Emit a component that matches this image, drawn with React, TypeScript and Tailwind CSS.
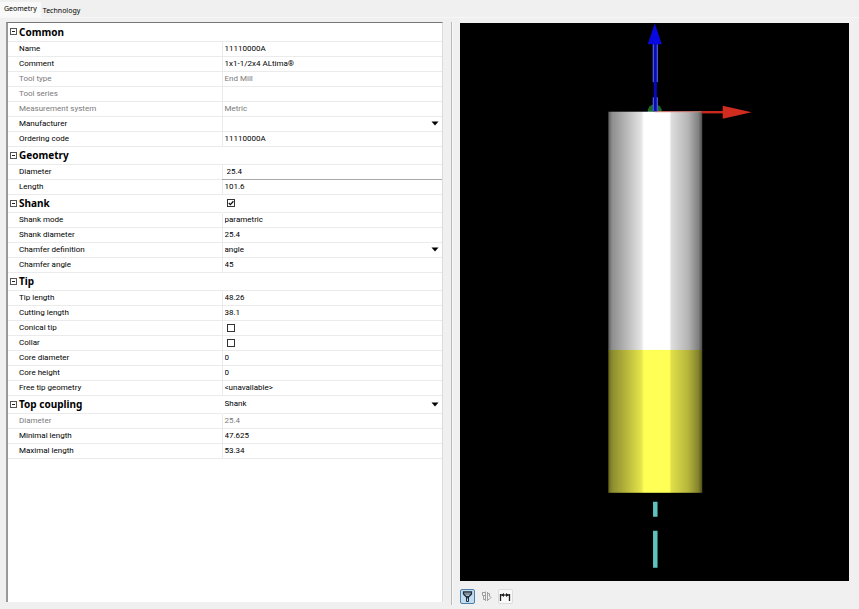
import { useState, type ReactNode } from "react";

type Kind = "text" | "static" | "select" | "check" | "edit";
type Field = { label: string; value?: string; kind: Kind; muted?: boolean; checked?: boolean };
type Section = { title: string; head?: Field; fields: Field[] };

const sections: Section[] = [
  {
    title: "Common",
    fields: [
      { label: "Name", value: "11110000A", kind: "text" },
      { label: "Comment", value: "1x1-1/2x4 ALtima®", kind: "text" },
      { label: "Tool type", value: "End Mill", kind: "static", muted: true },
      { label: "Tool series", value: "", kind: "static", muted: true },
      { label: "Measurement system", value: "Metric", kind: "static", muted: true },
      { label: "Manufacturer", value: "", kind: "select" },
      { label: "Ordering code", value: "11110000A", kind: "text" },
    ],
  },
  {
    title: "Geometry",
    fields: [
      { label: "Diameter", value: "25.4", kind: "edit" },
      { label: "Length", value: "101.6", kind: "text" },
    ],
  },
  {
    title: "Shank",
    head: { label: "Shank", kind: "check", checked: true },
    fields: [
      { label: "Shank mode", value: "parametric", kind: "text" },
      { label: "Shank diameter", value: "25.4", kind: "text" },
      { label: "Chamfer definition", value: "angle", kind: "select" },
      { label: "Chamfer angle", value: "45", kind: "text" },
    ],
  },
  {
    title: "Tip",
    fields: [
      { label: "Tip length", value: "48.26", kind: "text" },
      { label: "Cutting length", value: "38.1", kind: "text" },
      { label: "Conical tip", kind: "check" },
      { label: "Collar", kind: "check" },
      { label: "Core diameter", value: "0", kind: "text" },
      { label: "Core height", value: "0", kind: "text" },
      { label: "Free tip geometry", value: "<unavailable>", kind: "text" },
    ],
  },
  {
    title: "Top coupling",
    head: { label: "Top coupling", value: "Shank", kind: "select" },
    fields: [
      { label: "Diameter", value: "25.4", kind: "static", muted: true },
      { label: "Minimal length", value: "47.625", kind: "text" },
      { label: "Maximal length", value: "53.34", kind: "text" },
    ],
  },
];

function Control({ id, field }: { id: string; field: Field }) {
  if (field.kind === "check") {
    return (
      <span className="ml-1 grid size-2 place-items-center">
        <input
          id={id}
          type="checkbox"
          aria-label={field.label}
          defaultChecked={field.checked}
          className="peer col-start-1 row-start-1 size-2 appearance-none border border-[#333] bg-white"
        />
        <svg viewBox="0 0 8 8" className="pointer-events-none col-start-1 row-start-1 hidden size-2 peer-checked:block">
          <path d="M1.8 4 L3.4 5.6 L6.4 2.2" fill="none" stroke="#111" strokeWidth="1.3" />
        </svg>
      </span>
    );
  }
  if (field.kind === "select") {
    return (
      <span className="grid items-center">
        <select
          id={id}
          aria-label={field.label}
          defaultValue={field.value}
          className="col-start-1 row-start-1 h-3 w-full appearance-none bg-transparent pl-0.5 leading-3 outline-none"
        >
          <option value={field.value}>{field.value}</option>
        </select>
        <svg viewBox="0 0 8 5" className="pointer-events-none col-start-1 row-start-1 mr-[3px] h-[5px] w-2 justify-self-end">
          <path d="M0.5 0.5 H7.5 L4 4.5 Z" fill="#000" />
        </svg>
      </span>
    );
  }
  if (field.kind === "static") {
    return <output id={id} className="block h-3 pl-0.5 leading-3">{field.value}</output>;
  }
  return (
    <input
      id={id}
      defaultValue={field.value}
      className={`block h-3 w-full bg-transparent leading-3 outline-none ${field.kind === "edit" ? "pl-1" : "pl-0.5"}`}
    />
  );
}

function PropertySection({ section }: { section: Section }) {
  const [open, setOpen] = useState(true);
  const key = section.title.replace(/\s/g, "-");
  return (
    <tbody>
      <tr className="h-[18px] border-b border-[#ebebeb]">
        <th scope="rowgroup" colSpan={section.head ? 1 : 2} className="p-0 text-left">
          <button
            type="button"
            aria-expanded={open}
            onClick={() => setOpen(!open)}
            className="flex items-center gap-0.5 pl-0.5 font-['Noto_Sans',sans-serif] text-[10px] leading-3 font-bold text-black"
          >
            <svg viewBox="0 0 7 7" className="size-[7px]">
              <rect x="0.5" y="0.5" width="6" height="6" fill="#fff" stroke="#555" />
              <path d={open ? "M2 3.5 H5" : "M2 3.5 H5 M3.5 2 V5"} stroke="#222" />
            </svg>
            {section.title}
          </button>
        </th>
        {section.head && (
          <td className="border-l border-l-white p-0">
            <Control id={key} field={section.head} />
          </td>
        )}
      </tr>
      {open &&
        section.fields.map((field) => {
          const id = `${key}-${field.label.replace(/\s/g, "-")}`;
          return (
            <tr
              key={field.label}
              className={`h-[15px] border-b border-[#ebebeb] ${field.muted ? "text-[#7a7a7a]" : "text-black"}`}
            >
              <th scope="row" className="p-0 pl-[11px] text-left font-normal">
                <label htmlFor={id} className="block leading-3">{field.label}</label>
              </th>
              <td className={`border-l border-[#ebebeb] p-0 ${field.kind === "edit" ? "border-b border-b-[#a8a8a8]" : ""}`}>
                <Control id={id} field={field} />
              </td>
            </tr>
          );
        })}
    </tbody>
  );
}

function ToolButton({ label, active, boxed, children }: { label: string; active?: boolean; boxed?: boolean; children: ReactNode }) {
  const look = active
    ? "border-[#4d7fa8] bg-[#c4dcf0]"
    : boxed
      ? "border-[#dcdcdc] bg-[#fafafa]"
      : "border-transparent";
  return (
    <button type="button" aria-label={label} aria-pressed={!!active} className={`grid size-[15px] place-items-center rounded-[2px] border ${look}`}>
      <svg viewBox="0 0 13 13" className="size-[13px]" fill="none">
        {children}
      </svg>
    </button>
  );
}

function ToolView() {
  return (
    <svg viewBox="0 0 389 558" className="min-h-0 w-full flex-1 bg-black" role="img" aria-label="Tool preview">
      <defs>
        <linearGradient id="steel">
          <stop offset="0" stopColor="#5c5c5c" />
          <stop offset="0.04" stopColor="#8e8e8e" />
          <stop offset="0.2" stopColor="#bababa" />
          <stop offset="0.35" stopColor="#e4e4e4" />
          <stop offset="0.38" stopColor="#ffffff" />
          <stop offset="0.65" stopColor="#ffffff" />
          <stop offset="0.67" stopColor="#dedede" />
          <stop offset="0.85" stopColor="#b4b4b4" />
          <stop offset="0.96" stopColor="#808080" />
          <stop offset="1" stopColor="#4c4c4c" />
        </linearGradient>
        <linearGradient id="flute">
          <stop offset="0" stopColor="#66661f" />
          <stop offset="0.04" stopColor="#8c8c30" />
          <stop offset="0.2" stopColor="#b9b93c" />
          <stop offset="0.35" stopColor="#e4e44a" />
          <stop offset="0.38" stopColor="#ffff55" />
          <stop offset="0.65" stopColor="#ffff55" />
          <stop offset="0.67" stopColor="#dfdf49" />
          <stop offset="0.85" stopColor="#b5b53b" />
          <stop offset="0.96" stopColor="#82822c" />
          <stop offset="1" stopColor="#4e4e18" />
        </linearGradient>
      </defs>
      <circle cx="195" cy="88" r="7" fill="#1c6a2a" />
      <rect x="148.5" y="88.5" width="94" height="239" fill="url(#steel)" />
      <rect x="148.5" y="327" width="94" height="143" fill="url(#flute)" />
      <path d="M195 88.5 H242" stroke="#e08078" strokeWidth="1" />
      <path d="M242 89 H264" stroke="#c8281e" strokeWidth="2.4" />
      <path d="M263 82.5 L292 89 L263 95.5 Z" fill="#d02c20" />
      <rect x="193" y="20" width="5" height="68" fill="#0a0ab4" />
      <path d="M193.5 21 V59 M197.5 21 V59 M193.5 74 V88 M197.5 74 V88" stroke="#5a6ee0" />
      <rect x="193" y="59" width="1" height="15" fill="#000" />
      <rect x="197" y="59" width="1" height="15" fill="#000" />
      <path d="M195 0 L202 21 H188 Z" fill="#0808e0" />
      <path d="M195.5 479 V494 M195.5 508 V545" stroke="#5fc0c0" strokeWidth="4.5" />
    </svg>
  );
}

export default function App() {
  return (
    <div className="flex h-screen flex-col bg-[#f0f0f0] font-[Roboto,'Noto_Sans',sans-serif] text-[8px] text-black">
      <nav role="tablist" className="flex h-[17px] shrink-0 items-end font-['Noto_Sans',sans-serif] text-[7px] leading-3">
        <button type="button" role="tab" aria-selected="true" className="h-[15px] bg-[#f9f9f9] px-1 pb-0.5">
          Geometry
        </button>
        <button type="button" role="tab" aria-selected="false" className="h-3 px-0.5">
          Technology
        </button>
      </nav>
      <main className="flex min-h-0 flex-1 border-t border-[#f7f7f7] pt-1 pr-2.5 pl-1.5">
        <section className="mb-[7px] min-w-0 flex-[436] overflow-hidden border-t border-l-2 border-r border-t-[#777] border-r-[#dcdcdc] border-l-[#999] bg-white">
          <table className="w-full table-fixed border-collapse">
            <colgroup>
              <col className="w-[214px]" />
              <col />
            </colgroup>
            {sections.map((section) => (
              <PropertySection key={section.title} section={section} />
            ))}
          </table>
        </section>
        <div role="separator" aria-orientation="vertical" className="mr-[7px] mb-1 ml-2 w-0.5 border-l border-[#b8b8b8] bg-[#fafafa]" />
        <section className="flex min-w-0 flex-[390] flex-col pt-px">
          <ToolView />
          <div className="flex shrink-0 gap-1 pt-2 pb-[5px]">
            <ToolButton label="Show tool" active>
              <path d="M2.5 2 H10.5 V4 L8 6.5 H5 L2.5 4 Z" fill="#eef6fc" stroke="#1c2c3c" strokeWidth="1.3" />
              <path d="M3 4 H10 M5 8 H8 M5.5 7 H7.5 V11.5 H5.5 Z" stroke="#1c2c3c" />
            </ToolButton>
            <ToolButton label="Show holder">
              <path d="M5.5 1.5 V11 M2 2.5 H5.5 M2.5 2.5 V5.5 H5.5 M3.5 5.5 V9.5 H5.5 M7.5 2 V11 M7.5 3.5 H9.5 V6 M9 5.5 L11 7.5 L9 9.5 H7.5" stroke="#a0a0a0" />
            </ToolButton>
            <ToolButton label="Show dimensions" boxed>
              <path d="M1.5 4 V11 M10.5 4 V11" stroke="#222" strokeWidth="1.3" />
              <path d="M1.5 5 H10.5" stroke="#222" strokeWidth="1.2" />
              <path d="M2 5 L5 3 V7 Z M10 5 L7 3 V7 Z" fill="#222" />
            </ToolButton>
          </div>
        </section>
      </main>
    </div>
  );
}
